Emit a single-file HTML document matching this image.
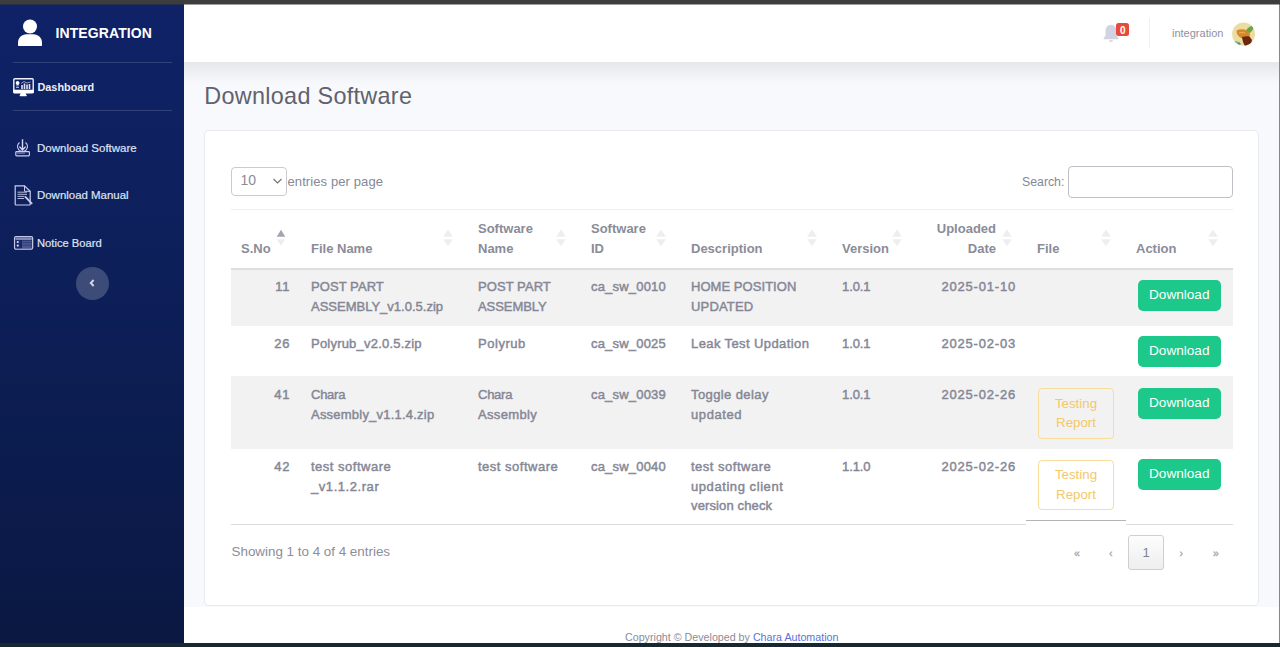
<!DOCTYPE html>
<html><head><meta charset="utf-8">
<style>
*{box-sizing:border-box;margin:0;padding:0}
html,body{width:1280px;height:647px;overflow:hidden;background:#f8f9fc;font-family:"Liberation Sans",sans-serif;color:#858796}
.abs{position:absolute}
#topdark{left:0;top:0;width:1280px;height:4px;background:#3d3d3d}
#topdark2{left:0;top:4px;width:1280px;height:1px;background:rgba(61,61,61,0.5)}
#botdark{left:0;top:643px;width:1280px;height:4px;background:#172830}
#rightdark{left:1279px;top:4px;width:1px;height:639px;background:#858789}
#sidebar{left:0;top:4px;width:184px;height:639px;background:linear-gradient(180deg,#0f2267 0%,#0d1f58 45%,#0a1842 100%)}
#topbar{left:184px;top:4px;width:1095px;height:58px;background:#fff}
#shadow{left:184px;top:62px;width:1095px;height:24px;background:linear-gradient(180deg,#e6e7eb 0%,#e9eaee 15%,#f0f1f5 50%,#f6f7fa 80%,#f8f9fc 100%)}
#title{left:204.3px;top:80.9px;font-size:23.4px;letter-spacing:0.3px;color:#60626e;white-space:nowrap;line-height:30px}
#card{left:204px;top:130px;width:1055px;height:476px;background:#fff;border:1px solid #e9eaf0;border-radius:5px}
#footer{left:184px;top:607px;width:1095px;height:36px;background:#fff}
.side-hr{position:absolute;left:13px;width:159px;height:1px;background:rgba(255,255,255,0.15)}
.navtxt{position:absolute;left:37px;color:#dfe2f2;font-size:11.5px;white-space:nowrap;line-height:14px;-webkit-text-stroke:0.2px #dfe2f2}

#ctrl-select{left:231px;top:167px;width:56px;height:29px;border:1px solid #c9cbd4;border-radius:4px;background:#fff}
.t13{font-size:13px;line-height:19.5px;white-space:nowrap}
#dt{position:absolute;left:231px;top:209px;width:1002px;border-collapse:collapse;table-layout:fixed;font-size:13px;line-height:19.5px;color:#858796}
#dt th{font-weight:bold;text-align:left;vertical-align:bottom;padding:0 30px 9.4px 10px;color:#8a8c98;height:59px;border-top:1px solid #eceef4;border-bottom:2px solid #dedede;position:relative;white-space:normal}
#dt th.r{text-align:right;padding-right:31px}
#dt td{vertical-align:top;padding:7.5px 10px 0 10px;-webkit-text-stroke:0.45px #858796;white-space:nowrap}
#dt td.r{text-align:right;padding-right:11px}
#dt tr.s td{background:#f2f2f2}
#dt tr.r2 td{padding-top:8.3px}
#dt tr.r3 td{padding-top:9.5px}
#dt tr.r4 td{padding-top:8.6px}
.ord{position:absolute;right:15px;top:50%;width:10px;height:17px;margin-top:-8.5px}
.btn-dl{position:absolute;left:1138px;width:82.5px;height:31px;background:#1cc88a;border-radius:5px;color:#fff;font-size:13.6px;line-height:29.8px;text-align:center}
.btn-tr{position:absolute;left:1038px;width:76px;height:50.5px;border:1px solid #f8dc9a;border-radius:4px;color:#f3c868;font-size:13.3px;line-height:19.5px;text-align:center;padding-top:4.5px;background:transparent}
</style></head><body>
<div id="topdark" class="abs"></div>
<div id="sidebar" class="abs">
<svg class="abs" style="left:17px;top:15px" width="26" height="29" viewBox="0 0 26 29">
<circle cx="13" cy="7.5" r="7" fill="#fff"/>
<path d="M1 26.2V23.8C1 18.9 4.6 15.3 9.5 15.3H16.5C21.4 15.3 25 18.9 25 23.8V26.2Q25 27.1 24.1 27.1H1.9Q1 27.1 1 26.2Z" fill="#fff"/>
</svg>
<div class="abs" style="left:55.5px;top:22px;font-size:14px;line-height:14px;font-weight:bold;color:#fff;letter-spacing:0.1px;white-space:nowrap">INTEGRATION</div>
<div class="side-hr" style="top:58px"></div>
<svg class="abs" style="left:13px;top:73.8px" width="22" height="20" viewBox="0 0 22 20">
<rect x="0.8" y="0.8" width="19.4" height="14" rx="1" fill="none" stroke="#eef0fa" stroke-width="1.4"/>
<rect x="0.3" y="11.7" width="20.4" height="3.4" fill="#fff"/>
<path d="M7.8 15.1H12.6L13.6 17.3Q14.4 18.2 13 18.2H7.4Q6 18.2 6.8 17.3Z" fill="#fff"/>
<circle cx="4.6" cy="5" r="1.9" fill="#fff"/>
<rect x="3" y="7.5" width="3" height="0.8" fill="#c8cce8"/><rect x="3" y="9" width="3" height="0.8" fill="#c8cce8"/>
<rect x="8.2" y="7" width="1.6" height="4" fill="#dfe2f5"/><rect x="10.7" y="5.5" width="1.6" height="5.5" fill="#dfe2f5"/><rect x="13.2" y="6.5" width="1.6" height="4.5" fill="#dfe2f5"/><rect x="15.7" y="6" width="1.6" height="5" fill="#dfe2f5"/>
<path d="M8 5.5L11 3.5L14 5L17.5 4" stroke="#b8bde0" stroke-width="0.8" fill="none"/>
</svg>
<div class="abs" style="left:37.5px;top:75.6px;font-size:10.85px;line-height:14px;font-weight:bold;color:#eceef8;white-space:nowrap">Dashboard</div>
<div class="side-hr" style="top:106px"></div>
<svg class="abs" style="left:14px;top:134px" width="18" height="19" viewBox="0 0 18 19">
<path d="M8.5 1.2V11.5M5.4 8.6L8.5 12L11.6 8.6" stroke="#d6daf2" stroke-width="1.4" fill="none"/>
<path d="M5.5 4.5A5 5 0 1 0 11.5 4.5" stroke="#c6cbeb" stroke-width="1.1" fill="none"/>
<rect x="1.8" y="13.6" width="13.6" height="4.2" rx="0.8" fill="none" stroke="#c9cdea" stroke-width="1.2"/>
<rect x="3" y="14.6" width="8" height="1" fill="#8f96c8"/>
</svg>
<div class="navtxt" style="top:137.2px;font-size:11.5px">Download Software</div>
<svg class="abs" style="left:13px;top:180px" width="21" height="23" viewBox="0 0 21 23">
<path d="M2.2 1.8H11.5L17.2 7.3V20.3Q17.2 21 16.5 21H2.9Q2.2 21 2.2 20.3Z" fill="none" stroke="#c9cdea" stroke-width="1.2"/>
<path d="M11.5 1.8V7.3H17.2" fill="none" stroke="#c9cdea" stroke-width="1"/>
<path d="M4.5 8.2H14M4.5 10.3H14M4.5 12.4H11.5M4.5 14.5H11" stroke="#c9cdea" stroke-width="0.9"/>
<path d="M12 12.5L19.2 19.8" stroke="#c9cdea" stroke-width="1.8"/>
</svg>
<div class="navtxt" style="top:184.2px;font-size:11.45px">Download Manual</div>
<svg class="abs" style="left:13px;top:231px" width="21" height="16" viewBox="0 0 21 16">
<rect x="1.6" y="1.6" width="18" height="12.5" rx="1.3" fill="none" stroke="#c2c7e8" stroke-width="1.3"/>
<rect x="2.5" y="2.4" width="16.2" height="2.6" fill="#7e88bb"/>
<rect x="2.5" y="5" width="6" height="8.3" fill="#1a2a66"/>
<circle cx="4.8" cy="7" r="1.1" fill="#dfe2f5"/><circle cx="4.8" cy="10.6" r="1.1" fill="#dfe2f5"/>
<rect x="9" y="5.5" width="9.6" height="7.6" fill="#4a5590"/>
<path d="M9.5 7.6H18.5M9.5 10.2H18.5" stroke="#2a3878" stroke-width="0.7"/>
</svg>
<div class="navtxt" style="top:231.6px;font-size:11.2px">Notice Board</div>
<div class="abs" style="left:75.8px;top:263px;width:33px;height:33px;border-radius:50%;background:rgba(255,255,255,0.2)"></div>
<svg class="abs" style="left:88px;top:274px" width="9" height="10" viewBox="0 0 9 10"><path d="M5.6 2L2.8 5L5.6 8" stroke="#d4d8ea" stroke-width="1.9" fill="none"/></svg>
</div>
<div id="topbar" class="abs">
<svg class="abs" style="left:919px;top:20px" width="16" height="19" viewBox="0 0 16 19">
<path d="M8 0.8C4.6 0.8 2.6 3.6 2.6 6.8V11.2L0.6 14.4Q0.2 15.2 1 15.2H15Q15.8 15.2 15.4 14.4L13.4 11.2V6.8C13.4 3.6 11.4 0.8 8 0.8Z" fill="#d1d3e2"/>
<path d="M6 16.2H10Q10 18 8 18Q6 18 6 16.2Z" fill="#d1d3e2"/>
</svg>
<div class="abs" style="left:932.4px;top:18.6px;width:12.6px;height:13.6px;background:#e74a3b;border-radius:2.5px;color:#fff;font-weight:bold;font-size:10px;line-height:15px;text-align:center">0</div>
<div class="abs" style="left:964.5px;top:14.4px;width:1px;height:29.6px;background:#eff0f4"></div>
<div class="abs" style="left:988px;top:22px;font-size:11px;line-height:14px;color:#8f919c;white-space:nowrap">integration</div>
<svg class="abs" style="left:1047px;top:18px" width="24" height="25" viewBox="0 0 24 25">
<defs><clipPath id="av"><circle cx="12.6" cy="12.1" r="11.5"/></clipPath></defs>
<circle cx="12.6" cy="12.1" r="11.5" fill="#ecdca0"/>
<g clip-path="url(#av)">
<path d="M14.5 9.5Q17 4 23 3.5Q22.5 9 18 11.5Z" fill="#6aa548"/>
<path d="M5.5 8.5Q9 6.5 13.5 7.5Q18 9 19 12.5L18 16L12 17Q7.5 15 6 12Z" fill="#d4882e"/>
<path d="M11 15Q15 14 18.5 14.5L21 18Q20.5 21.5 18.5 23.5L14 24.5Q11.5 20 11 15Z" fill="#6a2812"/>
<path d="M8 11Q11 10 14 11" stroke="#efb050" stroke-width="1.2" fill="none"/>
<path d="M2 18.5Q6 19 10 21.5L9 24L3 22Z" fill="#7fae80"/>
<circle cx="8" cy="21.5" r="1.2" fill="#5a8fb0"/>
</g>
</svg>
</div>
<div id="shadow" class="abs"></div>
<div id="title" class="abs">Download Software</div>
<div id="card" class="abs"></div>
<div id="ctrl-select" class="abs"></div>
<div class="abs t13" style="left:240.5px;top:171.2px;font-size:14px;color:#8a8c98">10</div>
<svg class="abs" style="left:272px;top:177px" width="11" height="8" viewBox="0 0 11 8"><path d="M1.5 2L5.5 6L9.5 2" stroke="#6e707e" stroke-width="1.1" fill="none"/></svg>
<div class="abs t13" style="left:287.5px;top:172px;letter-spacing:0.1px">entries per page</div>
<div class="abs t13" style="left:1022px;top:172.5px;font-size:12.3px">Search:</div>
<div class="abs" style="left:1068px;top:166px;width:165px;height:32px;border:1px solid #bfc0c6;border-radius:4px;background:#fff"></div>
<table id="dt">
<colgroup><col style="width:70px"><col style="width:167px"><col style="width:113px"><col style="width:100px"><col style="width:151px"><col style="width:85px"><col style="width:110px"><col style="width:99px"><col style="width:107px"></colgroup>
<thead><tr>
<th class="r">S.No<svg class="ord" viewBox="0 0 10 17"><path d="M5 -0.3L9.3 6.8H0.7Z" fill="#858796" fill-opacity="0.75"/><path d="M5 15.8L9.2 9.3H0.8Z" fill="#858796" fill-opacity="0.15"/></svg></th>
<th>File Name<svg class="ord" viewBox="0 0 10 17"><path d="M5 -0.8L9.8 6.8H0.2Z" fill="#858796" fill-opacity="0.14"/><path d="M5 16.3L9.8 9.3H0.2Z" fill="#858796" fill-opacity="0.14"/></svg></th>
<th>Software Name<svg class="ord" viewBox="0 0 10 17"><path d="M5 -0.8L9.8 6.8H0.2Z" fill="#858796" fill-opacity="0.14"/><path d="M5 16.3L9.8 9.3H0.2Z" fill="#858796" fill-opacity="0.14"/></svg></th>
<th>Software ID<svg class="ord" viewBox="0 0 10 17"><path d="M5 -0.8L9.8 6.8H0.2Z" fill="#858796" fill-opacity="0.14"/><path d="M5 16.3L9.8 9.3H0.2Z" fill="#858796" fill-opacity="0.14"/></svg></th>
<th>Description<svg class="ord" viewBox="0 0 10 17"><path d="M5 -0.8L9.8 6.8H0.2Z" fill="#858796" fill-opacity="0.14"/><path d="M5 16.3L9.8 9.3H0.2Z" fill="#858796" fill-opacity="0.14"/></svg></th>
<th>Version<svg class="ord" viewBox="0 0 10 17"><path d="M5 -0.8L9.8 6.8H0.2Z" fill="#858796" fill-opacity="0.14"/><path d="M5 16.3L9.8 9.3H0.2Z" fill="#858796" fill-opacity="0.14"/></svg></th>
<th class="r">Uploaded Date<svg class="ord" viewBox="0 0 10 17"><path d="M5 -0.8L9.8 6.8H0.2Z" fill="#858796" fill-opacity="0.14"/><path d="M5 16.3L9.8 9.3H0.2Z" fill="#858796" fill-opacity="0.14"/></svg></th>
<th>File<svg class="ord" viewBox="0 0 10 17"><path d="M5 -0.8L9.8 6.8H0.2Z" fill="#858796" fill-opacity="0.14"/><path d="M5 16.3L9.8 9.3H0.2Z" fill="#858796" fill-opacity="0.14"/></svg></th>
<th>Action<svg class="ord" viewBox="0 0 10 17"><path d="M5 -0.8L9.8 6.8H0.2Z" fill="#858796" fill-opacity="0.14"/><path d="M5 16.3L9.8 9.3H0.2Z" fill="#858796" fill-opacity="0.14"/></svg></th>
</tr></thead>
<tbody>
<tr class="s" style="height:57px"><td class="r"><span style="letter-spacing:0.6px">11</span></td><td><span style="letter-spacing:0.07px">POST PART</span><br>ASSEMBLY_v1.0.5.zip</td><td><span style="letter-spacing:0.07px">POST PART</span><br><span style="letter-spacing:-0.07px">ASSEMBLY</span></td><td><span style="letter-spacing:0.19px">ca_sw_0010</span></td><td><span style="letter-spacing:0.05px">HOME POSITION</span><br><span style="letter-spacing:0.17px">UPDATED</span></td><td><span style="letter-spacing:-0.1px">1.0.1</span></td><td class="r"><span style="letter-spacing:0.81px">2025-01-10</span></td><td></td><td></td></tr>
<tr class="r2" style="height:50px"><td class="r"><span style="letter-spacing:0.6px">26</span></td><td><span style="letter-spacing:0.21px">Polyrub_v2.0.5.zip</span></td><td><span style="letter-spacing:0.53px">Polyrub</span></td><td><span style="letter-spacing:0.19px">ca_sw_0025</span></td><td><span style="letter-spacing:0.4px">Leak Test Updation</span></td><td><span style="letter-spacing:-0.1px">1.0.1</span></td><td class="r"><span style="letter-spacing:0.81px">2025-02-03</span></td><td></td><td></td></tr>
<tr class="s r3" style="height:73px"><td class="r"><span style="letter-spacing:0.6px">41</span></td><td><span style="letter-spacing:-0.25px">Chara</span><br><span style="letter-spacing:0.22px">Assembly_v1.1.4.zip</span></td><td><span style="letter-spacing:-0.25px">Chara</span><br><span style="letter-spacing:0.33px">Assembly</span></td><td><span style="letter-spacing:0.19px">ca_sw_0039</span></td><td><span style="letter-spacing:0.4px">Toggle delay</span><br><span style="letter-spacing:0.6px">updated</span></td><td><span style="letter-spacing:-0.1px">1.0.1</span></td><td class="r"><span style="letter-spacing:0.81px">2025-02-26</span></td><td></td><td></td></tr>
<tr class="r4" style="height:75px"><td class="r"><span style="letter-spacing:0.6px">42</span></td><td><span style="letter-spacing:0.5px">test software</span><br><span style="letter-spacing:0.56px">_v1.1.2.rar</span></td><td><span style="letter-spacing:0.5px">test software</span></td><td><span style="letter-spacing:0.19px">ca_sw_0040</span></td><td><span style="letter-spacing:0.5px">test software</span><br><span style="letter-spacing:0.57px">updating client</span><br><span style="letter-spacing:0.13px">version check</span></td><td><span style="letter-spacing:-0.1px">1.1.0</span></td><td class="r"><span style="letter-spacing:0.81px">2025-02-26</span></td><td></td><td></td></tr>
</tbody></table>
<div class="abs" style="left:231px;top:524px;width:795px;height:1px;background:#dcdcdc"></div>
<div class="abs" style="left:1126px;top:524px;width:107px;height:1px;background:#dcdcdc"></div>
<div class="abs" style="left:1026px;top:520px;width:100px;height:1px;background:#b4b4b4"></div>
<div class="btn-dl" style="top:279.5px">Download</div>
<div class="btn-dl" style="top:336.4px">Download</div>
<div class="btn-dl" style="top:387.8px">Download</div>
<div class="btn-dl" style="top:459.4px">Download</div>
<div class="btn-tr" style="top:388px">Testing<br>Report</div>
<div class="btn-tr" style="top:459.6px">Testing<br>Report</div>
<div class="abs t13" style="left:231.5px;top:541.5px;font-size:13.4px;color:#8c8e9a">Showing 1 to 4 of 4 entries</div>

<div id="footer" class="abs"></div>
<div class="abs" style="left:1128px;top:535px;width:36px;height:34.5px;border:1px solid #cfcfcf;border-radius:3px;background:linear-gradient(180deg,#fdfdfd 0%,#eeeeee 100%)"></div>
<div class="abs" style="left:1128px;top:543px;width:36px;text-align:center;font-size:13px;line-height:19.5px;color:#808290">1</div>
<div class="abs" style="left:1074px;top:545.5px;font-size:10.5px;line-height:14px;color:#a4a6b0;-webkit-text-stroke:0.3px #a4a6b0">&laquo;</div>
<div class="abs" style="left:1109px;top:545.5px;font-size:10.5px;line-height:14px;color:#a4a6b0;-webkit-text-stroke:0.3px #a4a6b0">&lsaquo;</div>
<div class="abs" style="left:1179.5px;top:545.5px;font-size:10.5px;line-height:14px;color:#a4a6b0;-webkit-text-stroke:0.3px #a4a6b0">&rsaquo;</div>
<div class="abs" style="left:1213px;top:545.5px;font-size:10.5px;line-height:14px;color:#a4a6b0;-webkit-text-stroke:0.3px #a4a6b0">&raquo;</div>
<div class="abs" style="left:625px;top:630px;font-size:10.7px;line-height:14px;color:#8a8c98;white-space:nowrap">Copyright &copy; Developed by <span style="color:#5a73d8">Chara Automation</span></div>
<div id="botdark" class="abs"></div>
<div id="rightdark" class="abs"></div>
<div id="topdark2" class="abs"></div>
</body></html>
